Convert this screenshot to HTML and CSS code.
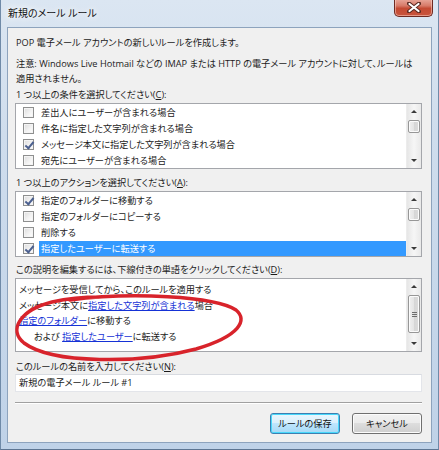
FILE: index.html
```html
<!DOCTYPE html>
<html lang="ja">
<head>
<meta charset="utf-8">
<title>新規のメール ルール</title>
<link rel="stylesheet" href="styles.css">
</head>
<body>
<div class="window">
  <div class="titlebar">
    <span class="title">新規のメール ルール</span>
    <div class="close" aria-label="閉じる">
      <svg width="14" height="11" viewBox="0 0 14 11">
        <path d="M2 1.5 L12 9.5 M12 1.5 L2 9.5" stroke="#5a2a22" stroke-width="4" stroke-linecap="round"/>
        <path d="M2.5 2 L11.5 9 M11.5 2 L2.5 9" stroke="#ffffff" stroke-width="2.2" stroke-linecap="round"/>
      </svg>
    </div>
  </div>

  <div class="client">
    <p class="intro">POP 電子メール アカウントの新しいルールを作成します。</p>
    <p class="note">注意: Windows Live Hotmail などの IMAP または HTTP の電子メール アカウントに対して、ルールは<br>適用されません。</p>

    <p class="caption">1 つ以上の条件を選択してください(<u>C</u>):</p>
    <div class="listbox">
      <ul class="rows">
        <li class="row"><span class="check"></span><span class="label">差出人にユーザーが含まれる場合</span></li>
        <li class="row"><span class="check"></span><span class="label">件名に指定した文字列が含まれる場合</span></li>
        <li class="row"><span class="check checked"></span><span class="label">メッセージ本文に指定した文字列が含まれる場合</span></li>
        <li class="row"><span class="check"></span><span class="label">宛先にユーザーが含まれる場合</span></li>
      </ul>
      <div class="scrollbar">
        <span class="arrow up"></span>
        <span class="track"><span class="thumb thumb-top"></span></span>
        <span class="arrow down"></span>
      </div>
    </div>

    <p class="caption cap-actions">1 つ以上のアクションを選択してください(<u>A</u>):</p>
    <div class="listbox">
      <ul class="rows">
        <li class="row"><span class="check checked"></span><span class="label">指定のフォルダーに移動する</span></li>
        <li class="row"><span class="check"></span><span class="label">指定のフォルダーにコピーする</span></li>
        <li class="row"><span class="check"></span><span class="label">削除する</span></li>
        <li class="row selected"><span class="check checked"></span><span class="label">指定したユーザーに転送する</span></li>
      </ul>
      <div class="scrollbar">
        <span class="arrow up"></span>
        <span class="track"><span class="thumb thumb-top"></span></span>
        <span class="arrow down"></span>
      </div>
    </div>

    <p class="caption cap-desc">この説明を編集するには、下線付きの単語をクリックしてください(<u>D</u>):</p>
    <div class="listbox desc">
      <div class="desc-lines">
        <p>メッセージを受信してから、このルールを適用する</p>
        <p>メッセージ本文に<a href="#">指定した文字列が含まれる</a>場合</p>
        <p><a href="#">指定のフォルダー</a>に移動する</p>
        <p class="indent">および <a href="#">指定したユーザー</a>に転送する</p>
      </div>
      <div class="scrollbar">
        <span class="arrow up"></span>
        <span class="track"><span class="thumb thumb-long"><span class="grip"></span></span></span>
        <span class="arrow down"></span>
      </div>
    </div>

    <p class="caption cap-name">このルールの名前を入力してください(<u>N</u>):</p>
    <div class="textbox">新規の電子メール ルール #1</div>

    <div class="separator"></div>

    <div class="buttons">
      <button class="btn default">ルールの保存</button>
      <button class="btn">キャンセル</button>
    </div>

    <svg class="markup" viewBox="8 28 423 415" width="423" height="415">
      <path d="M70 300 C 130 292, 215 296, 236 310 C 248 320, 240 336, 196 349 C 140 364, 52 364, 24 343 C 8 330, 20 310, 52 302 C 70 298, 88 297, 100 297"
            fill="none" stroke="#d8232b" stroke-width="3.5" stroke-linecap="round"/>
    </svg>
  </div>
</div>
</body>
</html>
```

FILE: styles.css
```css
* { box-sizing: border-box; }

html, body {
  margin: 0;
  padding: 0;
  width: 439px;
  height: 450px;
  overflow: hidden;
}

body {
  font-family: "Open Sans", "Noto Sans CJK JP", sans-serif;
  font-size: 9.2px;
  font-feature-settings: "palt" 1;
  color: #1b1b1b;
  background: #c5d6ea;
}

/* Aero frame */
.window {
  width: 439px;
  height: 450px;
  background: linear-gradient(180deg, #dbe6f2 0%, #cfdded 30%, #bfd2e8 100%);
  border-left: 1px solid #6f8aa8;
  border-right: 1px solid #6f8aa8;
  border-bottom: 1px solid #5d7592;
  display: flex;
  flex-direction: column;
}

.titlebar {
  height: 27px;
  flex: none;
  display: flex;
  align-items: flex-start;
  justify-content: space-between;
  padding-left: 7px;
  padding-right: 5px;
}

.title {
  margin-top: 5px;
  font-size: 10px;
  line-height: 16px;
  color: #111;
  text-shadow: 0 0 6px #ffffff, 0 0 10px #ffffff;
}

.close {
  width: 39px;
  height: 18px;
  margin-top: -1px;
  border: 1px solid #6e2a22;
  border-top: none;
  border-radius: 0 0 5px 5px;
  background: linear-gradient(180deg, #e9a99c 0%, #d77a68 40%, #c44a33 55%, #c8553d 100%);
  box-shadow: inset 0 0 0 1px rgba(255, 220, 210, 0.5);
  display: flex;
  align-items: center;
  justify-content: center;
}

/* Dialog client area */
.client {
  position: relative;
  flex: 1;
  margin: 0 6px 6px 6px;
  border: 1px solid #8da3bd;
  background: #f0f0f0;
  padding: 7px 9px 0 7px;
  display: flex;
  flex-direction: column;
}

.client p { margin: 0; }

.intro { line-height: 15px; padding-left: 1px; }

.note {
  margin-top: 6px !important;
  line-height: 15px;
  padding-left: 1px;
  white-space: nowrap;
}

.caption {
  line-height: 15px;
  margin-top: 1px !important;
  padding-left: 1px;
}

.caption u { text-underline-offset: 1px; }

.cap-actions { margin-top: 6px !important; }
.cap-desc { margin-top: 5px !important; }
.cap-name { margin-top: 7px !important; }

/* List boxes */
.listbox {
  margin-top: 1px;
  height: 66px;
  border: 1px solid #a4a6ab;
  background: #ffffff;
  display: flex;
  overflow: hidden;
}

.rows {
  list-style: none;
  margin: 0;
  padding: 0;
  flex: 1;
  min-width: 0;
}

.row {
  height: 16px;
  display: flex;
  align-items: center;
  white-space: nowrap;
}

.check {
  flex: none;
  width: 11px;
  height: 11px;
  margin-left: 7px;
  margin-right: 5px;
  border: 1px solid #8e8f8f;
  background: linear-gradient(135deg, #dcdcdc 0%, #f4f4f4 60%, #ffffff 100%);
  box-shadow: inset 0 0 0 1px #f4f4f4;
  position: relative;
}

.check.checked::after {
  content: "";
  position: absolute;
  left: 3px;
  top: 0px;
  width: 3px;
  height: 7px;
  border: solid #4c6190;
  border-width: 0 2px 2px 0;
  transform: rotate(40deg);
}

.label {
  padding: 0 2px;
  line-height: 15px;
}

.row.selected .label {
  background: #3399ff;
  color: #ffffff;
  flex: 1;
}

/* Scroll bars */
.scrollbar {
  flex: none;
  width: 15px;
  background: linear-gradient(90deg, #e6e6e6, #f6f6f6 50%, #e9e9e9);
  display: flex;
  flex-direction: column;
  border-left: 1px solid #ececec;
}

.arrow {
  flex: none;
  height: 15px;
  position: relative;
}

.arrow::after {
  content: "";
  position: absolute;
  left: 4px;
  border-left: 3px solid transparent;
  border-right: 3px solid transparent;
}

.arrow.up::after {
  top: 6px;
  border-bottom: 3px solid #3a3a3a;
}

.arrow.down::after {
  top: 6px;
  border-top: 3px solid #3a3a3a;
}

.track {
  flex: 1;
  position: relative;
}

.thumb {
  display: block;
  margin: 0 1px;
  border: 1px solid #979797;
  border-radius: 2px;
  background: linear-gradient(90deg, #f0f0f0, #e4e4e4 50%, #d6d6d6 51%, #dcdcdc);
  box-shadow: inset 0 0 0 1px #fbfbfb;
}

.thumb-top { height: 13px; margin-top: 1px; }

.thumb-long {
  height: 38px;
  margin-top: 1px;
  display: flex;
  align-items: center;
  justify-content: center;
}

.grip {
  width: 5px;
  height: 5px;
  background: repeating-linear-gradient(180deg, #6d6d6d 0 1px, transparent 1px 2px);
}

/* Rule description */
.desc {
  height: 74px;
}

.desc-lines {
  flex: 1;
  padding: 3px 0 0 3px;
}

.desc-lines p {
  line-height: 15.5px;
  white-space: nowrap;
}

.desc-lines p.indent { padding-left: 15px; }

.desc-lines a {
  color: #1532d6;
  text-decoration: underline;
  text-underline-offset: 1px;
}

/* Rule name */
.textbox {
  height: 18px;
  border: 1px solid #e3e5ea;
  border-top-color: #d8dbe1;
  background: #ffffff;
  line-height: 16px;
  padding-left: 3px;
}

.separator {
  margin-top: 10px;
  height: 2px;
  border-top: 1px solid #a0a0a0;
  border-bottom: 1px solid #ffffff;
}

.buttons {
  margin-top: 9px;
  display: flex;
  justify-content: flex-end;
  gap: 12px;
}

.btn {
  width: 70px;
  height: 21px;
  font: inherit;
  font-feature-settings: "palt" 1;
  white-space: nowrap;
  color: #111;
  line-height: 17px;
  padding: 0;
  border: 1px solid #707070;
  border-radius: 3px;
  background: linear-gradient(180deg, #f2f2f2 0%, #ebebeb 48%, #dddddd 50%, #cfcfcf 100%);
  box-shadow: inset 0 0 0 1px #fcfcfc;
}

.btn.default {
  border-color: #3c7fb1;
  background: linear-gradient(180deg, #eaf6fd 0%, #d9f0fc 48%, #bee6fd 50%, #a7d9f5 100%);
  box-shadow: inset 0 0 0 1px #48d8fb;
}

/* Hand-drawn highlight over the rule text */
.markup {
  position: absolute;
  left: 0;
  top: 0;
  pointer-events: none;
}
```
